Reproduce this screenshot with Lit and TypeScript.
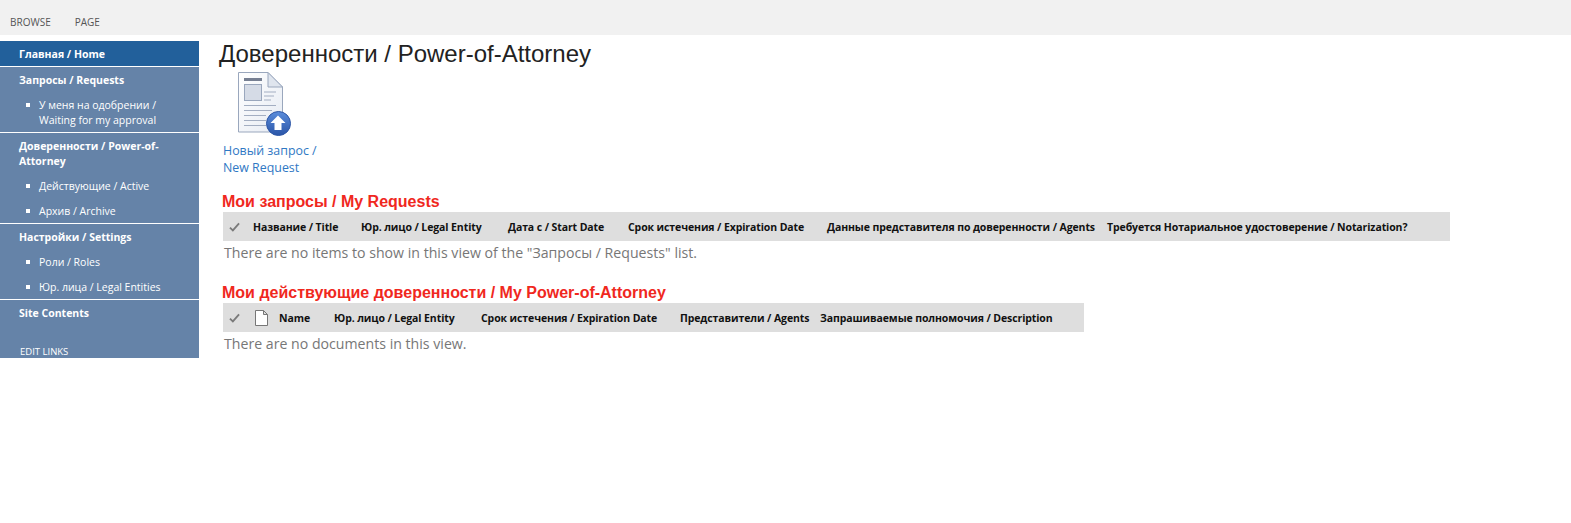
import { LitElement, html, css, svg } from "lit";
import { customElement } from "lit/decorators.js";

const check = svg`<svg class="chk" width="11" height="10" viewBox="0 0 12 11"><path d="M1 6.2 L4.2 9.2 L11 1.5" fill="none" stroke="#7a7a7a" stroke-width="2"/></svg>`;
const doc = svg`<svg class="doc" width="13" height="16" viewBox="0 0 13 16"><path d="M.5 .5H8.5L12.5 4.5V15.5H.5Z M8.5 .5V4.5H12.5" fill="#fff" stroke="#777" stroke-width="1"/></svg>`;

const req = [
  ["Название / Title", 108], ["Юр. лицо / Legal Entity", 147], ["Дата с / Start Date", 120],
  ["Срок истечения / Expiration Date", 199], ["Данные представителя по доверенности / Agents", 280],
  ["Требуется Нотариальное удостоверение / Notarization?", 343],
] as [string, number][];
const poa = [
  ["Name", 55], ["Юр. лицо / Legal Entity", 147], ["Срок истечения / Expiration Date", 199],
  ["Представители / Agents", 140], ["Запрашиваемые полномочия / Description", 264],
] as [string, number][];

@customElement("app-root")
export class AppRoot extends LitElement {
  static styles = css`
    :host { display: block; height: 523px; background: #fff; font-family: "Open Sans", "Noto Sans", sans-serif; overflow: hidden; }
    .ribbon { height: 35px; background: #f1f1f1; display: flex; gap: 24px; padding: 15px 0 0 10px; box-sizing: border-box; font-size: 10px; line-height: 14px; color: #555; }
    .body { display: flex; align-items: flex-start; }
    nav { width: 199px; margin-top: 6px; height: 317px; background: #6583a8; color: #fff; flex: none; font-size: 10.5px; position: relative; }
    .top { font-weight: 700; padding: 0 10px 0 19px; line-height: 15px; }
    .home { background: #22609b; height: 25px; line-height: 27px; border-bottom: 1px solid #fff; }
    .group { border-bottom: 1px solid #fff; padding: 6px 0 0; }
    .group.last { border: 0; }
    ul { margin: 0; padding: 0 0 4px; list-style: none; }
    li { padding: 0 8px 0 39px; line-height: 15px; position: relative; margin-top: 10px; }
    li::before { content: ""; position: absolute; left: 26px; top: 5px; width: 4px; height: 4px; background: #fff; }
    .edit { position: absolute; left: 20px; top: 304px; font-size: 9.5px; line-height: 14px; }
    main { flex: 1; padding-left: 20px; min-width: 0; }
    h1 { font: 400 24px/30px "Liberation Sans", Arial, sans-serif; color: #222; margin: 4px 0 0 0; }
    .new { margin-left: 4px; width: 110px; }
    .new svg { display: block; margin: 3px 0 0 15px; }
    .new a { display: block; color: #2f78c4; font-size: 12.4px; line-height: 17px; margin-top: 6px; }
    h2 { font: 700 16px/18px "Liberation Sans", Arial, sans-serif; color: #f0281e; margin: 0 0 0 3px; }
    .req { margin-top: 17px; }
    .poa { margin-top: 21px; }
    .hdr { display: flex; align-items: center; height: 29px; background: #dedede; margin: 1px 0 0 4px; font-size: 10.5px; letter-spacing: -0.1px; font-weight: 700; color: #111; }
    .req .hdr { width: 1227px; }
    .poa .hdr { width: 861px; }
    .c { white-space: nowrap; flex: none; }
    .icons { flex: none; display: flex; align-items: center; }
    .chk { margin-left: 6px; }
    .doc { margin-left: 15px; margin-right: 11px; }
    .spacer { width: 13px; flex: none; }
    .empty { color: #777; font-size: 14.15px; line-height: 20px; margin: 2px 0 0 5px; }
  `;

  private col([t, w]: [string, number]) {
    return html`<div class="c" style="width:${w}px">${t}</div>`;
  }

  render() {
    return html`
      <div class="ribbon"><span>BROWSE</span><span>PAGE</span></div>
      <div class="body">
        <nav>
          <div class="top home">Главная / Home</div>
          <div class="group"><div class="top">Запросы / Requests</div>
            <ul><li>У меня на одобрении / Waiting for my approval</li></ul></div>
          <div class="group"><div class="top">Доверенности / Power-of-Attorney</div>
            <ul><li>Действующие / Active</li><li>Архив / Archive</li></ul></div>
          <div class="group"><div class="top">Настройки / Settings</div>
            <ul><li>Роли / Roles</li><li>Юр. лица / Legal Entities</li></ul></div>
          <div class="group last"><div class="top">Site Contents</div></div>
          <div class="edit">EDIT LINKS</div>
        </nav>
        <main>
          <h1>Доверенности / Power-of-Attorney</h1>
          <div class="new">
            <svg width="56" height="64" viewBox="0 0 56 64">
              <defs>
                <linearGradient id="pg" x1="0" y1="0" x2="1" y2="1"><stop offset="0" stop-color="#fff"/><stop offset="1" stop-color="#e6ebf3"/></linearGradient>
                <linearGradient id="bl" x1="0" y1="0" x2="0" y2="1"><stop offset="0" stop-color="#5b8ddb"/><stop offset="1" stop-color="#2a55a8"/></linearGradient>
              </defs>
              <path d="M.5 .5H30L44.5 15V60H.5Z" fill="url(#pg)" stroke="#9aa7bd"/>
              <path d="M30 .5V15H44.5Z" fill="#dfe5ee" stroke="#9aa7bd"/>
              <rect x="6" y="6" width="18" height="3" fill="#767f92"/>
              <rect x="6.5" y="12.5" width="17" height="16" fill="#d5dbe6" stroke="#9aa7bd"/>
              <path d="M26 20H38M26 24H36M26 28H33M6 33.5H38M6 38.5H34M6 43.5H28M6 48.5H28M6 53.5H28" stroke="#a3aec2" stroke-width="1" fill="none"/>
              <circle cx="40.5" cy="51.5" r="12" fill="url(#bl)" stroke="#2d56a6"/>
              <path d="M40 43.5L47.5 51H43.5V58H36.5V51H32.5Z" fill="#fff"/>
            </svg>
            <a>Новый запрос / New Request</a>
          </div>
          <section class="req">
            <h2>Мои запросы / My Requests</h2>
            <div class="hdr"><div class="icons">${check}</div><div class="spacer"></div>${req.map((c) => this.col(c))}</div>
            <div class="empty">There are no items to show in this view of the "Запросы / Requests" list.</div>
          </section>
          <section class="poa">
            <h2>Мои действующие доверенности / My Power-of-Attorney</h2>
            <div class="hdr"><div class="icons">${check}${doc}</div>${poa.map((c) => this.col(c))}</div>
            <div class="empty">There are no documents in this view.</div>
          </section>
        </main>
      </div>
    `;
  }
}
